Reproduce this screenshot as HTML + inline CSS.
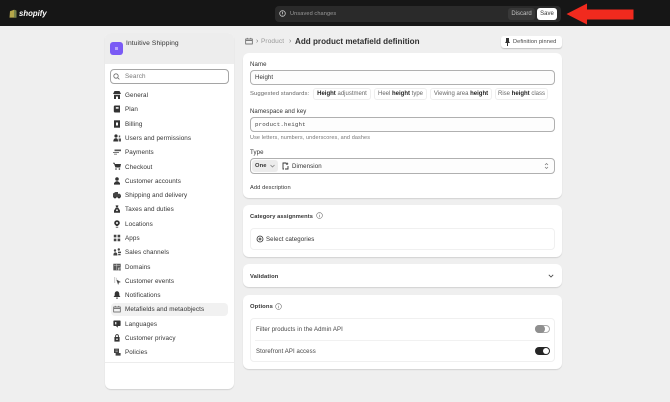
<!DOCTYPE html>
<html><head><meta charset="utf-8"><style>
*{box-sizing:border-box}
html,body{margin:0;padding:0;width:670px;height:402px;overflow:hidden;background:#efefef}
body{font-family:"Liberation Sans",sans-serif;color:#303030;position:relative}
#w{position:absolute;left:0;top:0;width:670px;height:402px;filter:blur(.35px)}
.a{position:absolute;white-space:nowrap}
.t{position:absolute;white-space:nowrap;font-size:6.1px;line-height:10px;letter-spacing:.1px;margin-top:1px}
.card{position:absolute;left:243px;width:319px;background:#fff;border-radius:6px;box-shadow:0 1px 1px rgba(0,0,0,.12)}
.inp{position:absolute;left:250px;width:305px;background:#fdfdfd;border:1px solid #b0b0b0;border-radius:4px}
.chip{position:absolute;top:88px;height:12px;border:1px solid #eee;border-radius:3px;font-size:6px;line-height:11px;padding:0;text-align:center;white-space:nowrap;color:#666;background:#fff}
.chip b{color:#222}
.nav{position:absolute;left:125px;font-size:6.3px;line-height:10px;color:#333;white-space:nowrap;letter-spacing:.1px;margin-top:1px}
.i{position:absolute;left:113px;width:8px;height:8px}
.sub{position:absolute;left:250px;width:305px;border:1px solid #f0f0f0;border-radius:4px;background:#fff}
</style></head><body><div id="w">
<div class="a" style="left:0;top:0;width:670px;height:26px;background:#161616"></div>
<svg class="a" style="left:9px;top:9px" width="8" height="9" viewBox="0 0 8 9"><path d="M1 2.2 5 .8 7.5 1.6 7.5 8.6 .5 8.6Z" fill="#b5a64a"/><path d="M5 .8 7.5 1.6 7.5 8.6 5 8.6Z" fill="#77824a"/></svg>
<div class="a" style="left:19px;top:7px;font:italic bold 7.8px/13px 'Liberation Sans',sans-serif;color:#fff">shopify</div>
<div class="a" style="left:275px;top:6px;width:286px;height:16px;background:#2a2a2a;border-radius:4px"></div>
<svg class="a" style="left:279px;top:10px" width="7" height="7" viewBox="0 0 7 7"><circle cx="3.5" cy="3.5" r="2.8" fill="none" stroke="#c8c8c8" stroke-width=".8"/><path d="M3.5 1.8V4M3.5 4.8v.5" stroke="#c8c8c8" stroke-width=".8"/></svg>
<div class="t" style="left:290px;top:8px;color:#9a9a9a;font-size:5.6px">Unsaved changes</div>
<div class="a" style="left:508px;top:8px;width:27px;height:12px;background:#383838;border-radius:3px;color:#c4c4c4;font-size:6px;line-height:13px;text-align:center">Discard</div>
<div class="a" style="left:537px;top:8px;width:20px;height:12px;background:#fff;border-radius:3px;color:#333;font-size:6px;line-height:13px;text-align:center">Save</div>
<svg class="a" style="left:566px;top:3px" width="68" height="22" viewBox="0 0 68 22"><path d="M.5 11 21 .5V6.5H67.5V16.5H21V21.5Z" fill="#f12a1e"/></svg>

<div class="a" style="left:105px;top:33px;width:129px;height:356px;background:#fff;border-radius:6px;box-shadow:0 1px 1px rgba(0,0,0,.12);overflow:hidden">
<div style="height:31px;background:#ededed"></div></div>
<div class="a" style="left:110px;top:42px;width:13px;height:13px;background:#7a5af5;border-radius:3px"></div>
<div class="a" style="left:115px;top:47px;width:3px;height:3px;background:#b9a6fb"></div>
<div class="t" style="left:126px;top:38px;color:#333;font-size:6.7px">Intuitive Shipping</div>
<div class="a" style="left:110px;top:69px;width:119px;height:15px;background:#fff;border:1px solid #a5a5a5;border-radius:4px"></div>
<svg class="a" style="left:113px;top:73px" width="7" height="7" viewBox="0 0 7 7"><circle cx="3" cy="3" r="2.2" fill="none" stroke="#666" stroke-width=".8"/><path d="M4.6 4.6 6.4 6.4" stroke="#666" stroke-width=".8"/></svg>
<div class="t" style="left:125px;top:71px;color:#777;font-size:6.3px">Search</div>

<div class="a" style="left:111px;top:303px;width:117px;height:13px;background:#f1f1f1;border-radius:4px"></div>

<svg class="i" style="top:91px" viewBox="0 0 8 8"><path d="M1.5 0H6.5L8 3H0Z M1 3.8H7V8H5V5.5H3V8H1Z" fill="#333"/></svg><div class="nav" style="top:90px">General</div>
<svg class="i" style="top:105px" viewBox="0 0 8 8"><path d="M1.5 .5H7V7.5H1.5L.8 6.5V1.5Z" fill="#333"/><path d="M2.8 2H5.6V3.8H2.8Z" fill="#ddd"/></svg><div class="nav" style="top:104px">Plan</div>
<svg class="i" style="top:120px" viewBox="0 0 8 8"><path d="M1 .3H7V7.7H1Z" fill="#333"/><path d="M3 2.5H5V5.5H3Z" fill="#fff"/></svg><div class="nav" style="top:119px">Billing</div>
<svg class="i" style="top:134px" viewBox="0 0 8 8"><circle cx="3" cy="2" r="1.6" fill="#333"/><path d="M.3 7.5C.3 5 1.5 4.2 3 4.2S5 5 5 7.5Z" fill="#333"/><path d="M5.6 4.5H8V7.5H5.6Z M5.8 1.5 7.2 1.5 7.2 3.4 5.8 3.4Z" fill="#555"/></svg><div class="nav" style="top:133px">Users and permissions</div>
<svg class="i" style="top:148px" viewBox="0 0 8 8"><path d="M1.5 1.5H8V3.2H1.5Z" fill="#555"/><path d="M0 4H6V5H0ZM1 5.8H4V6.6H1Z" fill="#777"/></svg><div class="nav" style="top:147px">Payments</div>
<svg class="i" style="top:162px" viewBox="0 0 8 8"><path d="M0 .8H1.6L2 2H8L7.2 5.5H2.4L1 1.6H0Z" fill="#333"/><circle cx="3" cy="7" r=".8" fill="#333"/><circle cx="6.4" cy="7" r=".8" fill="#333"/></svg><div class="nav" style="top:162px">Checkout</div>
<svg class="i" style="top:177px" viewBox="0 0 8 8"><circle cx="4" cy="2" r="1.8" fill="#333"/><path d="M1 6 3 4.2H5L7 6V7.6H1Z" fill="#333"/></svg><div class="nav" style="top:176px">Customer accounts</div>
<svg class="i" style="top:191px" viewBox="0 0 8 8"><path d="M0 2.5 2.5 1H5V2.8H7L8 4.5V6.5H0Z" fill="#444"/><circle cx="2" cy="6.6" r=".9" fill="#222"/><circle cx="6" cy="6.6" r=".9" fill="#222"/></svg><div class="nav" style="top:190px">Shipping and delivery</div>
<svg class="i" style="top:205px" viewBox="0 0 8 8"><path d="M2.6 .4H5.4L5 2H3Z M3 2.4H5L7 5.5V7.8H1V5.5Z" fill="#333"/><circle cx="4" cy="5.3" r=".9" fill="#fff"/></svg><div class="nav" style="top:204px">Taxes and duties</div>
<svg class="i" style="top:220px" viewBox="0 0 8 8"><path d="M4 .2A2.8 2.8 0 0 1 6.8 3C6.8 4.6 5 5.6 4.6 6H3.4C3 5.6 1.2 4.6 1.2 3A2.8 2.8 0 0 1 4 .2Z" fill="#333"/><circle cx="4" cy="3" r="1" fill="#fff"/><path d="M2.8 6.8H5.2V7.6H2.8Z" fill="#333"/></svg><div class="nav" style="top:219px">Locations</div>
<svg class="i" style="top:234px" viewBox="0 0 8 8"><path d="M.8.8H3.4V3.4H.8ZM4.6.8H7.2V3.4H4.6ZM.8 4.6H3.4V7.2H.8ZM4.6 4.6H7.2V7.2H4.6Z" fill="#444"/></svg><div class="nav" style="top:233px">Apps</div>
<svg class="i" style="top:248px" viewBox="0 0 8 8"><circle cx="2" cy="2.5" r="1.2" fill="#444"/><circle cx="5.8" cy="1.5" r="1.2" fill="#444"/><path d="M.4 7.5C.4 5.5 1 4.4 2.4 4.4S4.4 5.5 4.4 7.5ZM5 3.6H8V5H5ZM5.2 5.8H7.6V7.2H5.2Z" fill="#444"/></svg><div class="nav" style="top:247px">Sales channels</div>
<svg class="i" style="top:263px" viewBox="0 0 8 8"><path d="M.3.8H7.7V4.8H5V7.4H.3Z" fill="#555"/><path d="M1 2.2H7M3.8 1V7" stroke="#ddd" stroke-width=".5"/><path d="M5.4 5.2H7.8V7.6H5.4Z" fill="#777"/></svg><div class="nav" style="top:262px">Domains</div>
<svg class="i" style="top:277px" viewBox="0 0 8 8"><path d="M1 1H2.2M1 3H2.2M1 5H2.2" stroke="#888" stroke-width=".8"/><path d="M3.4 .8V2M3.4 2.6 7.6 5 5.8 5.6 5.2 7.6Z" fill="#444" stroke="#666" stroke-width=".3"/></svg><div class="nav" style="top:276px">Customer events</div>
<svg class="i" style="top:291px" viewBox="0 0 8 8"><path d="M4 .3C5.6.3 6.3 1.6 6.3 3V4.4L7.4 6H.6L1.7 4.4V3C1.7 1.6 2.4.3 4 .3Z" fill="#333"/><path d="M3 6.6H5L4.6 7.7H3.4Z" fill="#333"/></svg><div class="nav" style="top:290px">Notifications</div>
<svg class="i" style="top:305px" viewBox="0 0 8 8"><path d="M.7 2H7.3V7H.7ZM.7 3.4H7.3M2.2 .9V2M5.8 .9V2" fill="none" stroke="#555" stroke-width=".7"/></svg><div class="nav" style="top:304px">Metafields and metaobjects</div>
<svg class="i" style="top:320px" viewBox="0 0 8 8"><path d="M1 .5H7A.8.8 0 0 1 7.6 1.2V5.2A.8.8 0 0 1 7 6H4.8V7.8L3 6H1A.8.8 0 0 1 .4 5.2V1.2A.8.8 0 0 1 1 .5Z" fill="#333"/><path d="M2 2H3.4V4.4H2Z" fill="#ddd"/></svg><div class="nav" style="top:319px">Languages</div>
<svg class="i" style="top:334px" viewBox="0 0 8 8"><path d="M2.6 3V2A1.4 1.4 0 0 1 5.4 2V3" fill="none" stroke="#333" stroke-width=".9"/><path d="M1.4 3H6.6V7.6H1.4Z" fill="#333"/><circle cx="4" cy="5.2" r=".8" fill="#fff"/></svg><div class="nav" style="top:333px">Customer privacy</div>
<svg class="i" style="top:348px" viewBox="0 0 8 8"><path d="M1 .6H6V5H7.6V7.6H2.6V5H1Z" fill="#444"/><path d="M2.4 2H4.8M2.4 3.4H4.8" stroke="#ccc" stroke-width=".5"/></svg><div class="nav" style="top:347px">Policies</div>
<div class="a" style="left:105px;top:362px;width:129px;height:1px;background:#ececec"></div>

<svg class="a" style="left:245px;top:37px" width="8" height="8" viewBox="0 0 8 8"><path d="M.7 2H7.3V7H.7ZM.7 3.4H7.3M2.2 .9V2M5.8 .9V2" fill="none" stroke="#555" stroke-width=".7"/></svg>
<div class="t" style="left:256px;top:36px;color:#777;font-size:7px">›</div>
<div class="t" style="left:261px;top:36px;color:#999;font-size:6.5px">Product</div>
<div class="t" style="left:289px;top:36px;color:#777;font-size:7px">›</div>
<div class="a" style="left:295px;top:35px;font-size:8.1px;line-height:14px;font-weight:bold;color:#303030">Add product metafield definition</div>
<div class="a" style="left:501px;top:36px;width:61px;height:12px;background:#fff;border-radius:3px;box-shadow:0 1px 1px rgba(0,0,0,.2)"></div>
<svg class="a" style="left:505px;top:38px" width="5" height="8" viewBox="0 0 5 8"><path d="M1 0H4V3.5L5 5H3V8H2V5H0L1 3.5Z" fill="#333"/></svg>
<div class="t" style="left:513px;top:36px;font-size:5.6px;color:#444">Definition pinned</div>

<div class="card" style="top:53px;height:145px"></div>
<div class="t" style="left:250px;top:59px">Name</div>
<div class="inp" style="top:70px;height:15px"></div>
<div class="t" style="left:255px;top:72px;color:#333">Height</div>
<div class="t" style="left:250px;top:88px;color:#666;font-size:5.9px">Suggested standards:</div>
<div class="chip" style="left:313px;width:58px"><b>Height</b> adjustment</div>
<div class="chip" style="left:374px;width:53px">Heel <b>height</b> type</div>
<div class="chip" style="left:430px;width:62px">Viewing area <b>height</b></div>
<div class="chip" style="left:495px;width:53px">Rise <b>height</b> class</div>
<div class="t" style="left:250px;top:106px;font-size:6px">Namespace and key</div>
<div class="inp" style="top:117px;height:15px"></div>
<div class="a" style="left:255px;top:120px;font:5.8px/10px 'Liberation Mono',monospace;color:#444;letter-spacing:.15px">product.height</div>
<div class="t" style="left:250px;top:132px;color:#777;font-size:5.5px">Use letters, numbers, underscores, and dashes</div>
<div class="t" style="left:250px;top:147px">Type</div>
<div class="inp" style="top:158px;height:16px"></div>
<div class="a" style="left:252px;top:160px;width:26px;height:12px;background:#ececec;border-radius:3px"></div>
<div class="t" style="left:255px;top:160px;font-size:5.8px;font-weight:bold;color:#333">One</div>
<svg class="a" style="left:270px;top:164px" width="5" height="4" viewBox="0 0 5 4"><path d="M.5 1 2.5 3 4.5 1" fill="none" stroke="#777" stroke-width=".7"/></svg>
<svg class="a" style="left:282px;top:162px" width="7" height="8" viewBox="0 0 7 8"><path d="M4 1H1V7H2M3 7H6V4M5 .5V3M3.8 1.8H6.2" fill="none" stroke="#333" stroke-width=".9"/></svg>
<div class="t" style="left:292px;top:161px">Dimension</div>
<svg class="a" style="left:544px;top:162px" width="5" height="8" viewBox="0 0 5 8"><path d="M1 3 2.5 1.5 4 3M1 5 2.5 6.5 4 5" fill="none" stroke="#777" stroke-width=".7"/></svg>
<div class="t" style="left:250px;top:182px;font-size:5.7px;color:#333">Add description</div>

<div class="card" style="top:205px;height:52px"></div>
<div class="t" style="left:250px;top:211px;font-weight:bold;font-size:5.7px;color:#333">Category assignments</div>
<svg class="a" style="left:316px;top:212px" width="7" height="7" viewBox="0 0 7 7"><circle cx="3.5" cy="3.5" r="2.9" fill="none" stroke="#777" stroke-width=".6"/><path d="M3.5 3V5.2M3.5 1.8v.5" stroke="#777" stroke-width=".6"/></svg>
<div class="sub" style="top:228px;height:22px"></div>
<svg class="a" style="left:256px;top:235px" width="8" height="8" viewBox="0 0 8 8"><circle cx="4" cy="4" r="3" fill="none" stroke="#333" stroke-width=".8"/><path d="M2.5 4H5.5M4 2.5V5.5" stroke="#333" stroke-width=".9"/></svg>
<div class="t" style="left:266px;top:234px">Select categories</div>

<div class="card" style="top:264px;height:23px"></div>
<div class="t" style="left:250px;top:271px;font-weight:bold;font-size:5.8px;color:#333">Validation</div>
<svg class="a" style="left:548px;top:274px" width="6" height="4" viewBox="0 0 6 4"><path d="M.8 .8 3 3 5.2 .8" fill="none" stroke="#444" stroke-width=".8"/></svg>

<div class="card" style="top:295px;height:74px"></div>
<div class="t" style="left:250px;top:301px;font-weight:bold;font-size:5.9px;color:#333">Options</div>
<svg class="a" style="left:275px;top:303px" width="7" height="7" viewBox="0 0 7 7"><circle cx="3.5" cy="3.5" r="2.9" fill="none" stroke="#777" stroke-width=".6"/><path d="M3.5 3V5.2M3.5 1.8v.5" stroke="#777" stroke-width=".6"/></svg>
<div class="sub" style="top:318px;height:44px"></div>
<div class="a" style="left:255px;top:340px;width:295px;height:1px;background:#f1f1f1"></div>
<div class="t" style="left:256px;top:324px;color:#444;font-size:6px">Filter products in the Admin API</div>
<div class="t" style="left:256px;top:346px;color:#444;font-size:6px">Storefront API access</div>
<div class="a" style="left:535px;top:325px;width:15px;height:8px;border-radius:4px;background:#fff;border:.7px solid #aaa"></div>
<div class="a" style="left:535px;top:325px;width:10px;height:8px;border-radius:4px;background:#8f8f8f"></div>
<div class="a" style="left:535px;top:347px;width:15px;height:8px;border-radius:4px;background:#262626"></div>
<div class="a" style="left:543px;top:348px;width:6px;height:6px;border-radius:3px;background:#fff"></div>
</div></body></html>
